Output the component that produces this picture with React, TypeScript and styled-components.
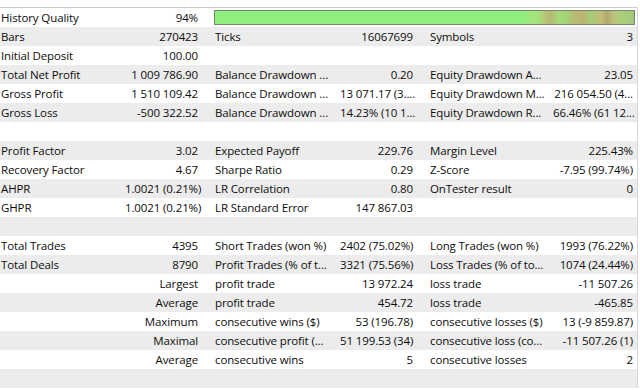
import styled, { createGlobalStyle } from "styled-components";

type Row = string[] | null;

const rows: Row[] = [
    ["History Quality", "94%"],
    ["Bars", "270423", "Ticks", "16067699", "Symbols", "3"],
    ["Initial Deposit", "100.00", "", "", "", ""],
    ["Total Net Profit", "1 009 786.90", "Balance Drawdown ...", "0.20", "Equity Drawdown A...", "23.05"],
    ["Gross Profit", "1 510 109.42", "Balance Drawdown ...", "13 071.17 (3....", "Equity Drawdown M...", "216 054.50 (4..."],
    ["Gross Loss", "-500 322.52", "Balance Drawdown ...", "14.23% (10 1...", "Equity Drawdown R...", "66.46% (61 12..."],
    null,
    ["Profit Factor", "3.02", "Expected Payoff", "229.76", "Margin Level", "225.43%"],
    ["Recovery Factor", "4.67", "Sharpe Ratio", "0.29", "Z-Score", "-7.95 (99.74%)"],
    ["AHPR", "1.0021 (0.21%)", "LR Correlation", "0.80", "OnTester result", "0"],
    ["GHPR", "1.0021 (0.21%)", "LR Standard Error", "147 867.03", "", ""],
    null,
    ["Total Trades", "4395", "Short Trades (won %)", "2402 (75.02%)", "Long Trades (won %)", "1993 (76.22%)"],
    ["Total Deals", "8790", "Profit Trades (% of t...", "3321 (75.56%)", "Loss Trades (% of to...", "1074 (24.44%)"],
    ["", "Largest", "profit trade", "13 972.24", "loss trade", "-11 507.26"],
    ["", "Average", "profit trade", "454.72", "loss trade", "-465.85"],
    ["", "Maximum", "consecutive wins ($)", "53 (196.78)", "consecutive losses ($)", "13 (-9 859.87)"],
    ["", "Maximal", "consecutive profit (...", "51 199.53 (34)", "consecutive loss (co...", "-11 507.26 (1)"],
    ["", "Average", "consecutive wins", "5", "consecutive losses", "2"],
    null,
];

const App = () => {
    return (
        <>
            <GlobalStyle />
            <Report>
                {rows.map((row, i) => (
                    <Line key={i} $odd={i % 2 === 1}>
                        {row === null ? (
                            <Blank />
                        ) : row.length === 2 ? (
                            <>
                                <Label>{row[0]}</Label>
                                <Value>{row[1]}</Value>
                                <QualityCell>
                                    <QualityBar />
                                </QualityCell>
                            </>
                        ) : (
                            row.map((text, j) =>
                                j % 2 === 0 ? (
                                    <Label key={j}>{text}</Label>
                                ) : (
                                    <Value key={j} $last={j === 5}>
                                        {text}
                                    </Value>
                                )
                            )
                        )}
                    </Line>
                ))}
            </Report>
        </>
    );
};

export default App;

const GlobalStyle = createGlobalStyle`
    body {
        margin: 0;
        background: #ffffff;
        font-family: "Open Sans", "Liberation Sans", sans-serif;
        font-size: 11.5px;
        letter-spacing: -0.12px;
        color: #0c0c0c;
    }
`;

const Report = styled.div`
    margin-top: 7px;
    width: 637px;
    border-top: 1px solid #cdcdcd;
    border-right: 1px solid #d6d6d6;
`;

const Line = styled.div<{ $odd: boolean }>`
    display: grid;
    grid-template-columns: 125px 89px 126px 89px 124px 84px;
    height: 19px;
    line-height: 19px;
    background: ${(p) => (p.$odd ? "#ececec" : "#ffffff")};
`;

const Label = styled.div`
    padding-left: 1px;
    white-space: nowrap;
    overflow: hidden;
`;

const Value = styled.div<{ $last?: boolean }>`
    padding-right: ${(p) => (p.$last ? "4px" : "16px")};
    text-align: right;
    white-space: nowrap;
    overflow: hidden;
`;

const Blank = styled.div`
    grid-column: 1 / -1;
`;

const QualityCell = styled.div`
    grid-column: 3 / -1;
    display: flex;
    align-items: center;
    padding-right: 2px;
`;

const QualityBar = styled.div`
    width: 100%;
    height: 13px;
    border: 1px solid #75856f;
    background: linear-gradient(
        to right,
        #90ee7e 0%,
        #90ee7e 74%,
        #a6e47c 75.5%,
        #9ee57b 77%,
        #b6c977 78.5%,
        #b5b774 80%,
        #a8d97a 82%,
        #a3d277 84%,
        #b7bd76 85.5%,
        #bcb372 88%,
        #a6cd78 89.5%,
        #b4c475 91%,
        #c0ba78 92.5%,
        #b0a76c 93.5%,
        #bec07a 95%,
        #a9d07b 97%,
        #a5c77a 100%
    );
`;
